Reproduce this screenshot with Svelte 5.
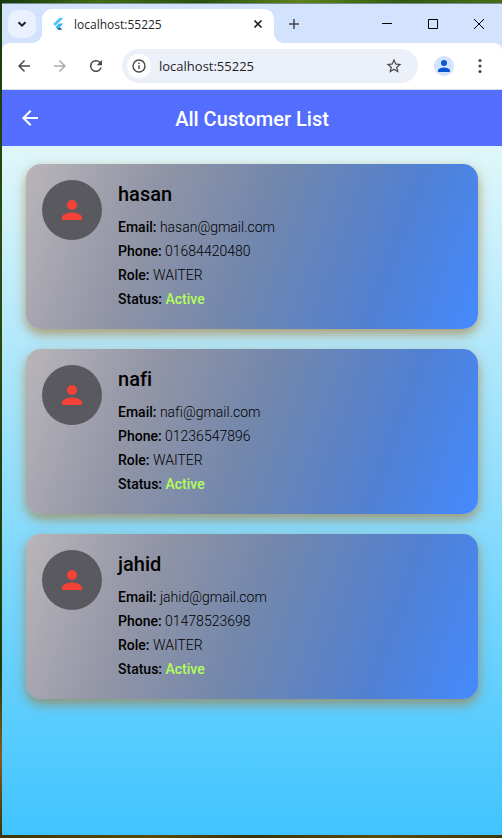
<script>
  const customers = [
    { name: 'hasan', email: 'hasan@gmail.com', phone: '01684420480', role: 'WAITER', status: 'Active' },
    { name: 'nafi', email: 'nafi@gmail.com', phone: '01236547896', role: 'WAITER', status: 'Active' },
    { name: 'jahid', email: 'jahid@gmail.com', phone: '01478523698', role: 'WAITER', status: 'Active' }
  ];
  let address = $state('localhost:55225');
</script>

<div class="desktop">
  <div class="window">
    <div class="tabstrip">
      <button class="search-tabs" aria-label="Search tabs">
        <svg width="12" height="12" viewBox="0 0 12 12"><path d="M2.5 4.2 6 7.7l3.5-3.5" fill="none" stroke="#1f1f1f" stroke-width="2" /></svg>
      </button>
      <div class="tab">
        <svg class="favicon" width="16" height="16" viewBox="0 0 16 16">
          <path d="M9.2 2h4.2L5.3 10.1 3.2 8z" fill="#54c5f8" />
          <path d="M9.2 7.6h4.2L9.7 11.2 7.6 9.2z" fill="#29b6f6" />
          <path d="M5.5 11.2 7.6 9.1l2.1 2.1-2.1 2.1z" fill="#29b6f6" />
          <path d="m7.6 13.3 2.1-2.1 2.6 2.6H8.1z" fill="#01579b" />
        </svg>
        <span class="tab-title">localhost:55225</span>
        <button class="tab-close" aria-label="Close tab">
          <svg width="10" height="10" viewBox="0 0 10 10"><path d="m1.5 1.5 7 7m0-7-7 7" stroke="#1f1f1f" stroke-width="1.7" /></svg>
        </button>
      </div>
      <button class="new-tab" aria-label="New tab">
        <svg width="12" height="12" viewBox="0 0 12 12"><path d="M6 1v10M1 6h10" stroke="#474747" stroke-width="1.5" /></svg>
      </button>
      <div class="controls">
        <button aria-label="Minimize"><svg width="10" height="10" viewBox="0 0 10 10"><path d="M0 4.5h10" stroke="#000" /></svg></button>
        <button aria-label="Maximize"><svg width="10" height="10" viewBox="0 0 10 10"><path d="M.5.5h9v9h-9z" fill="none" stroke="#000" /></svg></button>
        <button aria-label="Close"><svg width="10" height="10" viewBox="0 0 10 10"><path d="m0 0 10 10M10 0 0 10" stroke="#000" /></svg></button>
      </div>
    </div>

    <div class="toolbar">
      <button aria-label="Back"><svg width="18" height="18" viewBox="0 0 24 24"><path d="M20 11H7.8l5.6-5.6L12 4l-8 8 8 8 1.4-1.4L7.8 13H20z" fill="#474747" /></svg></button>
      <button aria-label="Forward" disabled><svg width="18" height="18" viewBox="0 0 24 24"><path d="M4 11h12.2l-5.6-5.6L12 4l8 8-8 8-1.4-1.4 5.6-5.6H4z" fill="#ababab" /></svg></button>
      <button aria-label="Reload"><svg width="18" height="18" viewBox="0 0 24 24"><path d="M17.65 6.35A8 8 0 1 0 19.73 14h-2.08A6 6 0 1 1 12 6c1.66 0 3.14.69 4.22 1.78L13 11h7V4z" fill="#474747" /></svg></button>
      <div class="omnibox">
        <button class="info" aria-label="View site information"><svg width="16" height="16" viewBox="0 0 16 16"><circle cx="8" cy="8" r="6" fill="none" stroke="#474747" stroke-width="1.4" /><path d="M8 7.3v3.8M8 4.7v1.4" stroke="#474747" stroke-width="1.4" /></svg></button>
        <input aria-label="Address" bind:value={address} />
        <button class="star" aria-label="Bookmark this tab"><svg width="18" height="18" viewBox="0 0 24 24"><path d="m22 9.24-7.19-.62L12 2 9.19 8.63 2 9.24l5.46 4.73L5.82 21 12 17.27 18.18 21l-1.63-7.03zM12 15.4l-3.76 2.27 1-4.28-3.32-2.88 4.38-.38L12 6.1l1.71 4.04 4.38.38-3.32 2.88 1 4.28z" fill="#474747" /></svg></button>
      </div>
      <button class="profile" aria-label="Profile"><svg width="18" height="18" viewBox="0 0 24 24"><path d="M12 12a4 4 0 1 0 0-8 4 4 0 0 0 0 8zm0 2c-2.67 0-8 1.34-8 4v2h16v-2c0-2.66-5.33-4-8-4z" fill="#0b57d0" /></svg></button>
      <button class="more" aria-label="Menu"><svg width="4" height="16" viewBox="0 0 4 16"><g fill="#474747"><circle cx="2" cy="2.5" r="1.6" /><circle cx="2" cy="8" r="1.6" /><circle cx="2" cy="13.5" r="1.6" /></g></svg></button>
    </div>

    <header class="appbar">
      <button aria-label="Go back"><svg width="24" height="24" viewBox="0 0 24 24"><path d="M20 11H7.83l5.59-5.59L12 4l-8 8 8 8 1.41-1.41L7.83 13H20z" fill="#fff" /></svg></button>
      <h1>All Customer List</h1>
    </header>

    <main>
      {#each customers as c}
        <article class="card">
          <div class="avatar">
            <svg width="30" height="30" viewBox="0 0 24 24"><path d="M12 12a4 4 0 1 0 0-8 4 4 0 0 0 0 8zm0 2c-2.67 0-8 1.34-8 4v2h16v-2c0-2.66-5.33-4-8-4z" fill="#f44336" /></svg>
          </div>
          <div class="details">
            <h2>{c.name}</h2>
            <p><b>Email:</b> {c.email}</p>
            <p><b>Phone:</b> {c.phone}</p>
            <p><b>Role:</b> {c.role}</p>
            <p><b>Status:</b> <b class="active">{c.status}</b></p>
          </div>
        </article>
      {/each}
    </main>
  </div>
</div>

<style>
  .desktop {
    box-sizing: border-box;
    min-height: 100vh;
    display: flex;
    padding: 3px 0 3px 2px;
    background:
      linear-gradient(90deg, #16380c, #3f6b12 20%, #28500c 40%, #5c8418 60%, #2f5a10 80%, #446f18) top / 100% 3px no-repeat,
      linear-gradient(90deg, #3d3608, #5c4a0c 30%, #3a3208 50%, #5a4c10 75%, #40380a) bottom / 100% 3px no-repeat,
      linear-gradient(#16380c, #2c4c0e 30%, #1a3a0a 80%, #8a5a1c 90%, #3d3608);
  }
  .window {
    flex: 1;
    min-width: 0;
    display: flex;
    flex-direction: column;
    border-top: 1px solid #7b8a96;
    background: #d3e3fd;
    font-family: "Open Sans", "Noto Sans", sans-serif;
  }
  button {
    display: flex;
    align-items: center;
    justify-content: center;
    flex-shrink: 0;
    padding: 0;
    border: 0;
    background: none;
  }
  .tabstrip {
    display: flex;
    align-items: center;
    height: 39px;
  }
  .search-tabs {
    width: 28px;
    height: 28px;
    margin: 0 6px;
    border-radius: 10px;
    background: #e9f0fe;
  }
  .tab {
    position: relative;
    box-sizing: border-box;
    align-self: flex-end;
    display: flex;
    align-items: center;
    width: 232px;
    height: 34px;
    padding: 0 8px 4px;
    border-radius: 10px 10px 0 0;
    background: #fff;
  }
  .tab::before,
  .tab::after {
    content: "";
    position: absolute;
    bottom: 0;
    width: 10px;
    height: 10px;
  }
  .tab::before {
    right: 100%;
    background: radial-gradient(circle at 0 0, transparent 10px, #fff 10px);
  }
  .tab::after {
    left: 100%;
    background: radial-gradient(circle at 100% 0, transparent 10px, #fff 10px);
  }
  .tab-title {
    flex: 1;
    margin-left: 8px;
    font-size: 12px;
    color: #1f1f1f;
  }
  .tab-close {
    width: 16px;
    height: 16px;
  }
  .new-tab {
    width: 28px;
    height: 28px;
    margin-left: 6px;
  }
  .controls {
    display: flex;
    align-self: stretch;
    margin-left: auto;
  }
  .controls button {
    width: 46px;
  }
  .toolbar {
    display: flex;
    align-items: center;
    height: 46px;
    padding: 0 8px 0 4px;
    border-bottom: 1px solid #dcdfe3;
    border-radius: 8px 8px 0 0;
    background: #fff;
  }
  .toolbar > button {
    width: 36px;
    height: 32px;
  }
  .toolbar .omnibox {
    flex: 1;
    min-width: 0;
    display: flex;
    align-items: center;
    height: 34px;
    margin: 0 16px 0 8px;
    padding: 0 15px 0 5px;
    border-radius: 17px;
    background: #ebf0f9;
  }
  .info {
    width: 24px;
    height: 24px;
    border-radius: 50%;
    background: #fff;
  }
  input {
    flex: 1;
    min-width: 0;
    padding: 0 0 0 8px;
    border: 0;
    outline: 0;
    background: none;
    font: 13px "Open Sans", "Noto Sans", sans-serif;
    color: #1f1f1f;
  }
  .toolbar .profile {
    width: 20px;
    height: 20px;
    border-radius: 50%;
    background: #d3e3fd;
  }
  .toolbar .more {
    width: 28px;
    margin-left: 12px;
  }
  .appbar {
    position: relative;
    display: flex;
    align-items: center;
    justify-content: center;
    height: 56px;
    background: #536dfe;
    font-family: Roboto, sans-serif;
  }
  .appbar button {
    position: absolute;
    left: 8px;
    width: 40px;
    height: 40px;
  }
  h1 {
    margin: 0;
    padding-top: 2px;
    font-size: 20px;
    font-weight: 500;
    line-height: 24px;
    color: #fff;
  }
  main {
    flex: 1;
    display: flex;
    flex-direction: column;
    gap: 20px;
    padding: 18px 24px;
    background: linear-gradient(#e0f7fa, #40c4ff);
    font-family: Roboto, sans-serif;
    font-variant-ligatures: none;
  }
  .card {
    display: flex;
    align-items: flex-start;
    gap: 16px;
    padding: 16px;
    border-radius: 15px;
    background: linear-gradient(110deg, #b9b5b9, #9295a6 26%, #7287ac 50%, #5180d2 78%, #448aff);
    box-shadow: 0 5px 12px rgba(170, 120, 50, 0.7);
  }
  .avatar {
    display: flex;
    align-items: center;
    justify-content: center;
    flex-shrink: 0;
    width: 60px;
    height: 60px;
    border-radius: 50%;
    background: #59595f;
  }
  .details {
    margin-bottom: 2px;
  }
  h2 {
    margin: 0 0 7px;
    font-size: 20px;
    font-weight: 500;
    line-height: 28px;
    color: #000;
  }
  p {
    margin: 0;
    font-size: 14px;
    font-weight: 300;
    line-height: 24px;
    color: #000;
  }
  b {
    font-weight: 500;
  }
  b.active {
    color: #b2ff59;
  }
</style>
